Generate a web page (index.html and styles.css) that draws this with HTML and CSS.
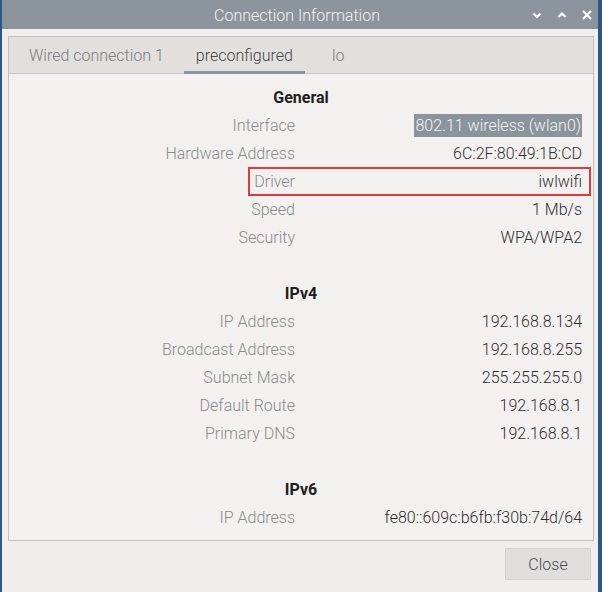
FILE: index.html
```html
<!DOCTYPE html>
<html>
<head>
<meta charset="utf-8">
<link rel="stylesheet" href="styles.css">
</head>
<body>
<div class="window">
  <div class="titlebar">
    <span class="title">Connection Information</span>
    <div class="controls">
      <svg class="ctl" width="12" height="12" viewBox="0 0 12 12"><path d="M2.5 4.5 L6 8 L9.5 4.5" fill="none" stroke="#fff" stroke-width="2.2"/></svg>
      <svg class="ctl" width="12" height="12" viewBox="0 0 12 12"><path d="M2.5 8 L6 4.5 L9.5 8" fill="none" stroke="#fff" stroke-width="2.2"/></svg>
      <svg class="ctl" width="12" height="12" viewBox="0 0 12 12"><path d="M2 2 L10 10 M10 2 L2 10" fill="none" stroke="#fff" stroke-width="2.2"/></svg>
    </div>
  </div>
  <div class="body">
    <div class="notebook">
      <div class="tabs">
        <div class="tab">Wired connection 1</div>
        <div class="tab active">preconfigured</div>
        <div class="tab last">lo</div>
      </div>
      <div class="page">
        <div class="row head"><span>General</span></div>
        <div class="row"><span class="label">Interface</span><span class="value"><span class="sel">802.11 wireless (wlan0)</span></span></div>
        <div class="row"><span class="label">Hardware Address</span><span class="value">6C:2F:80:49:1B:CD</span></div>
        <div class="row highlight"><span class="label">Driver</span><span class="value">iwlwifi</span></div>
        <div class="row"><span class="label">Speed</span><span class="value">1 Mb/s</span></div>
        <div class="row"><span class="label">Security</span><span class="value">WPA/WPA2</span></div>
        <div class="row blank"></div>
        <div class="row head"><span>IPv4</span></div>
        <div class="row"><span class="label">IP Address</span><span class="value">192.168.8.134</span></div>
        <div class="row"><span class="label">Broadcast Address</span><span class="value">192.168.8.255</span></div>
        <div class="row"><span class="label">Subnet Mask</span><span class="value">255.255.255.0</span></div>
        <div class="row"><span class="label">Default Route</span><span class="value">192.168.8.1</span></div>
        <div class="row"><span class="label">Primary DNS</span><span class="value">192.168.8.1</span></div>
        <div class="row blank"></div>
        <div class="row head"><span>IPv6</span></div>
        <div class="row"><span class="label">IP Address</span><span class="value">fe80::609c:b6fb:f30b:74d/64</span></div>
      </div>
    </div>
    <div class="footer">
      <button class="btn">Close</button>
    </div>
  </div>
</div>
</body>
</html>
```
FILE: styles.css
```css
* { box-sizing: border-box; }
html, body {
  margin: 0;
  padding: 0;
  height: 100%;
}
body {
  background: #2c5785;
  font-family: Roboto, "Liberation Sans", sans-serif;
  font-weight: 300;
  font-size: 16px;
  overflow: hidden;
}
.window {
  margin-left: 2px;
  width: 596px;
  height: 592px;
  display: flex;
  flex-direction: column;
  background: #efeeec;
}
.titlebar {
  height: 29px;
  flex: none;
  background: #8c959d;
  display: flex;
  align-items: center;
  justify-content: center;
  position: relative;
}
.title {
  color: #f1f2f3;
  font-size: 16px;
  font-weight: 300;
  margin-left: -6px;
  margin-top: 1px;
}
.controls {
  position: absolute;
  right: 5px;
  top: 9px;
  display: flex;
  gap: 13px;
}
.ctl { display: block; }
.body {
  flex: 1;
  padding: 7px 3px 0 6px;
  display: flex;
  flex-direction: column;
}
.notebook {
  width: 586px;
  height: 505px;
  border: 1px solid #c4c1bc;
  background: #f2f1f0;
  display: flex;
  flex-direction: column;
}
.tabs {
  height: 37px;
  flex: none;
  background: #e2e0dd;
  border-bottom: 1px solid #c9c6c1;
  display: flex;
  padding-left: 8px;
}
.tab {
  padding: 4px 12px 0;
  margin-right: 8px;
  color: #7d7d7d;
  display: flex;
  align-items: center;
  border-bottom: 3px solid transparent;
  margin-bottom: -1px;
  line-height: 1;
}
.tab.last {
  margin-left: 7px;
}
.tab.active {
  color: #454545;
  border-bottom-color: #8b949c;
}
.page {
  padding-top: 9px;
  position: relative;
}
.row {
  height: 28px;
  display: grid;
  grid-template-columns: 286px 1fr;
  align-items: center;
  position: relative;
}
.row.head {
  display: flex;
  justify-content: center;
  font-weight: 700;
  color: #1e1e1e;
}
.label {
  text-align: right;
  color: #8a8a8a;
}
.value {
  text-align: right;
  color: #2e2e2e;
  padding-right: 11px;
}
.sel {
  background: #8b949c;
  color: #f4f4f4;
  padding: 2px 1px 2px 1px;
}
.highlight::after {
  content: "";
  position: absolute;
  left: 239px;
  right: 2px;
  top: 0px;
  bottom: -1px;
  border: 2px solid #e03a3e;
}
.footer {
  display: flex;
  justify-content: flex-end;
  padding-top: 7px;
  padding-right: 4px;
}
.btn {
  width: 86px;
  height: 32px;
  background: #e0dfdd;
  border: 1px solid #d4d2cf;
  font-family: Roboto, "Liberation Sans", sans-serif;
  font-weight: 300;
  font-size: 16px;
  color: #4a4a4a;
  padding: 0;
}
```
